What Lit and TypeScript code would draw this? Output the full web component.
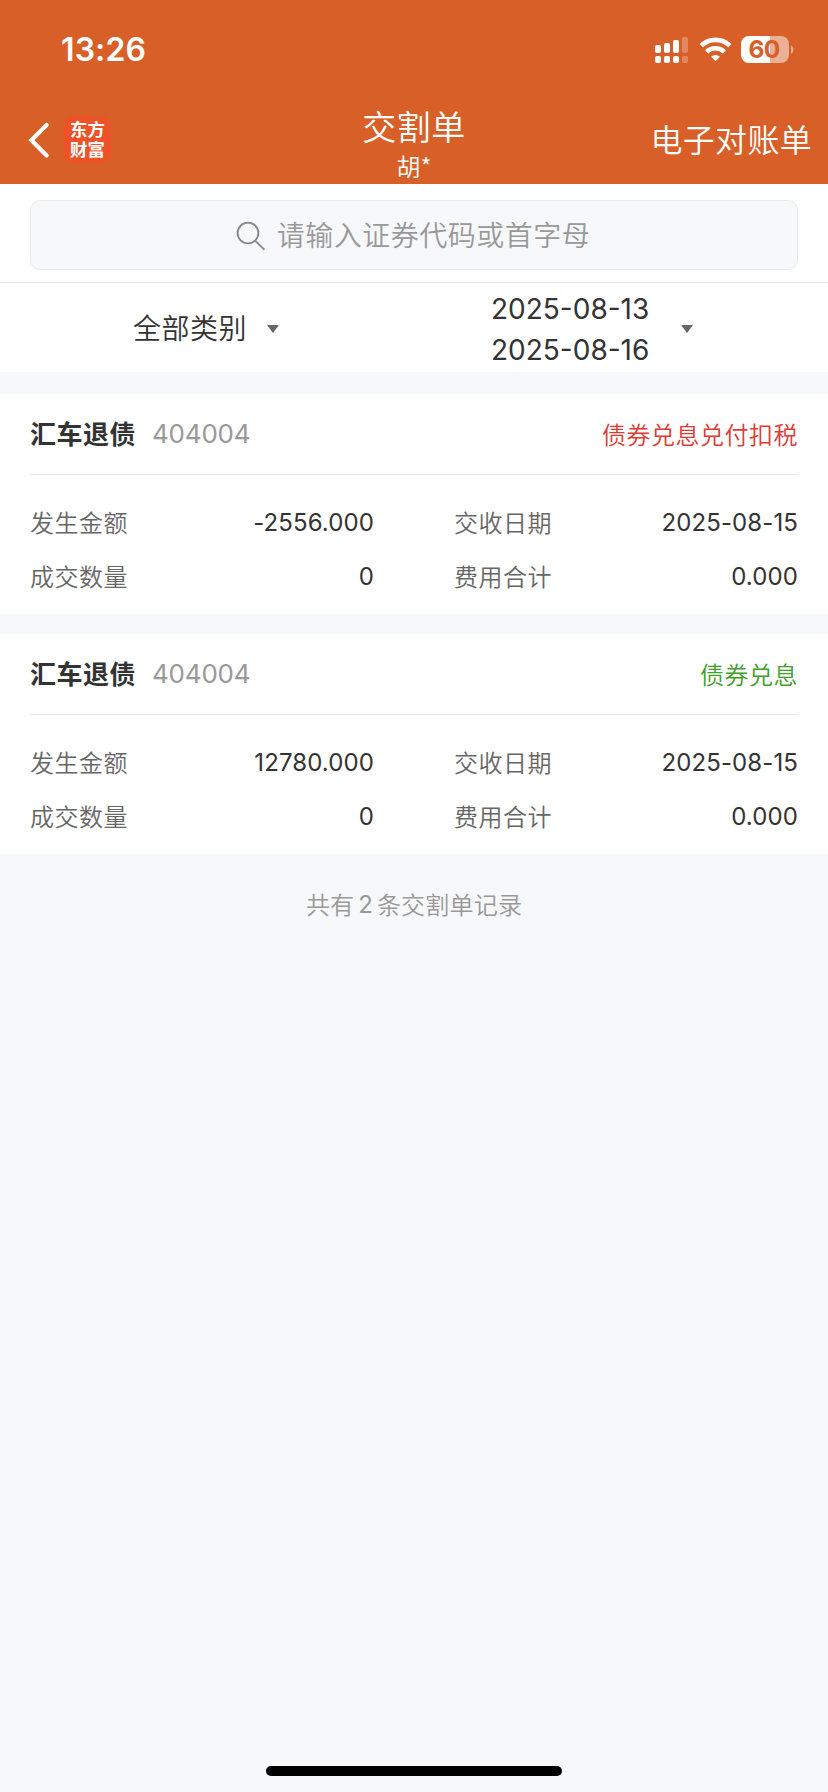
import { LitElement, html, css, svg } from "lit";
import { customElement, property } from "lit/decorators.js";

interface Settlement {
  name: string;
  code: string;
  kind: string;
  tone: "red" | "green";
  amount: string;
  date: string;
  quantity: string;
  fee: string;
}

const RECORDS: Settlement[] = [
  { name: "汇车退债", code: "404004", kind: "债券兑息兑付扣税", tone: "red", amount: "-2556.000", date: "2025-08-15", quantity: "0", fee: "0.000" },
  { name: "汇车退债", code: "404004", kind: "债券兑息", tone: "green", amount: "12780.000", date: "2025-08-15", quantity: "0", fee: "0.000" },
];

@customElement("status-bar")
class StatusBar extends LitElement {
  static styles = css`
    :host { display: flex; align-items: center; justify-content: space-between; height: 100px; padding: 0 34px 0 61px; box-sizing: border-box; }
    .time { font: 600 32px/40px Inter, sans-serif; letter-spacing: 0.1px; color: #fff; }
    .icons { display: block; }
    .level { font: 700 24.5px Inter, sans-serif; fill: #d86028; letter-spacing: -0.6px; }
  `;
  render() {
    const bars = [[0, 45], [9, 43], [18, 40], [27, 37]];
    return html`
      <span class="time">13:26</span>
      <svg class="icons" width="140" height="30" viewBox="654 35 140 30">
        ${bars.map(([x, top], i) => svg`
          <g fill="#fff" opacity=${i === 3 ? 0.25 : 1}>
            <rect x=${655 + x} y=${top} width="6" height=${53 - top} rx="2"></rect>
            <rect x=${655 + x} y="56" width="6" height="7" rx="2"></rect>
          </g>`)}
        <g fill="none" stroke="#fff" stroke-width="4.6">
          <path d="M701.2 45.6a20.6 20.6 0 0 1 28.6 0"></path>
          <path d="M706.6 51.8a12.9 12.9 0 0 1 17.8 0"></path>
        </g>
        <path d="M715.5 61.2l-4.4-4.5a6.3 6.3 0 0 1 8.8 0z" fill="#fff"></path>
        <path d="M749 36h21v27h-21a8 8 0 0 1-8-8v-11a8 8 0 0 1 8-8z" fill="#fff"></path>
        <path d="M770 36h11a8 8 0 0 1 8 8v11a8 8 0 0 1-8 8h-11z" fill="#fff" opacity="0.5"></path>
        <path d="M791 45.3a5 5 0 0 1 0 8.6z" fill="#fff" opacity="0.5"></path>
        <text class="level" x="764" y="58.4" text-anchor="middle">60</text>
      </svg>`;
  }
}

@customElement("title-bar")
class TitleBar extends LitElement {
  static styles = css`
    :host { display: grid; grid-template-columns: 1fr auto 1fr; height: 84px; color: #fff; font-family: "Noto Sans CJK SC", sans-serif; }
    .left { display: flex; align-items: center; gap: 15px; padding: 0 0 5px 28px; }
    .logo { width: 47px; height: 47px; border-radius: 10px; background: #ee5228; padding: 2.5px 5px 0 6px; font-size: 17.4px; font-weight: 700; line-height: 20px; box-sizing: border-box; }
    .middle { text-align: center; font-weight: 350; padding-top: 3px; }
    .title { font-size: 34px; line-height: 46px; letter-spacing: 0.5px; }
    .holder { font-size: 24px; line-height: 33px; }
    .right { display: flex; align-items: center; justify-content: flex-end; padding: 0 16px 9px 0; font-size: 32px; font-weight: 350; letter-spacing: 0.3px; }
  `;
  render() {
    return html`
      <div class="left">
        <svg width="21" height="36" viewBox="0 0 21 36" fill="none" stroke="#fff" stroke-width="4.2" stroke-linecap="round">
          <path d="M18.6 3L3.4 18.2L18.6 33.6"></path>
        </svg>
        <div class="logo">东方财富</div>
      </div>
      <div class="middle">
        <div class="title">交割单</div>
        <div class="holder">胡*</div>
      </div>
      <div class="right">电子对账单</div>`;
  }
}

@customElement("search-box")
class SearchBox extends LitElement {
  static styles = css`
    :host { display: block; padding: 16px 30px 12px; background: #fff; border-bottom: 1px solid #ebebeb; }
    .box { height: 70px; box-sizing: border-box; border: 1px solid #ebebed; border-radius: 10px; background: #f7f8fa; display: flex; align-items: center; justify-content: center; gap: 11px; padding-right: 2px; font: 350 28px/40px "Noto Sans CJK SC", sans-serif; letter-spacing: 0.5px; color: #999; }
    .hint { padding-bottom: 2px; }
    svg { margin-top: 2px; }
  `;
  render() {
    return html`
      <div class="box">
        <svg width="30" height="30" viewBox="0 0 30 30" fill="none" stroke="#888" stroke-width="1.9">
          <circle cx="12" cy="12" r="10.4"></circle><path d="M19 19.6L28.4 28.6"></path>
        </svg>
        <span class="hint">请输入证券代码或首字母</span>
      </div>`;
  }
}

@customElement("filter-bar")
class FilterBar extends LitElement {
  static styles = css`
    :host { display: grid; grid-template-columns: 1fr 1fr; height: 89px; background: #fff; color: #333; }
    .cell { display: flex; align-items: center; }
    .kind { padding-left: 133px; gap: 20px; font: 350 28px/40px "Noto Sans CJK SC", sans-serif; letter-spacing: 0.5px; }
    .dates { padding-left: 77px; gap: 32px; font: 400 28px/41px Inter, sans-serif; }
    .dates div { padding-top: 5px; }
    .dates span { display: block; }
    .label { padding-bottom: 1px; }
    svg { margin-top: 2px; }
  `;
  arrow() {
    return html`<svg width="12" height="8" viewBox="0 0 12 8"><path d="M0 0H12L6 8Z" fill="#666"></path></svg>`;
  }
  render() {
    return html`
      <div class="cell kind"><span class="label">全部类别</span>${this.arrow()}</div>
      <div class="cell dates"><div><span>2025-08-13</span><span>2025-08-16</span></div>${this.arrow()}</div>`;
  }
}

@customElement("record-card")
class RecordCard extends LitElement {
  @property({ attribute: false }) record!: Settlement;
  static styles = css`
    :host { display: block; height: 220px; padding: 0 30px; box-sizing: border-box; background: #fff; color: #333; font-family: "Noto Sans CJK SC", sans-serif; }
    .head { display: flex; align-items: center; height: 81px; box-sizing: border-box; border-bottom: 1px solid #ebebeb; }
    .name { font-size: 26px; font-weight: 700; letter-spacing: 0.5px; padding-bottom: 3px; }
    .code { margin-left: 16px; font: 400 26px/40px Inter, sans-serif; letter-spacing: -0.2px; color: #999; }
    .kind { margin-left: auto; font-size: 24px; font-weight: 350; letter-spacing: 0.5px; padding-bottom: 2px; }
    .red { color: #e03a34; }
    .green { color: #3fa02a; }
    .body { display: grid; grid-template-columns: 1fr 1fr; column-gap: 80px; grid-auto-rows: 54px; padding-top: 21px; }
    .pair { display: flex; align-items: center; justify-content: space-between; }
    .label { font-size: 24px; font-weight: 350; letter-spacing: 0.5px; color: #666; padding-bottom: 4px; }
    .value { font: 400 24px/34px Inter, sans-serif; letter-spacing: 0.1px; }
  `;
  render() {
    const r = this.record;
    const pairs = [["发生金额", r.amount], ["交收日期", r.date], ["成交数量", r.quantity], ["费用合计", r.fee]];
    return html`
      <div class="head">
        <span class="name">${r.name}</span><span class="code">${r.code}</span>
        <span class="kind ${r.tone}">${r.kind}</span>
      </div>
      <div class="body">
        ${pairs.map(([label, value]) => html`<div class="pair"><span class="label">${label}</span><span class="value">${value}</span></div>`)}
      </div>`;
  }
}

@customElement("app-root")
class AppRoot extends LitElement {
  static styles = css`
    :host { display: flex; flex-direction: column; height: 1792px; background: #f7f8fa; }
    .top { background: #d86028; height: 184px; }
    .list { display: flex; flex-direction: column; gap: 20px; padding-top: 22px; }
    .summary { display: flex; justify-content: center; gap: 4px; margin-top: 30px; font: 350 24px/40px "Noto Sans CJK SC", sans-serif; letter-spacing: 0.2px; color: #999; }
    .count { font-family: Inter, sans-serif; font-weight: 400; letter-spacing: 0; padding-top: 1px; }
    .home { width: 296px; height: 10px; border-radius: 5px; background: #000; margin: auto auto 16px; }
  `;
  render() {
    return html`
      <div class="top"><status-bar></status-bar><title-bar></title-bar></div>
      <search-box></search-box>
      <filter-bar></filter-bar>
      <div class="list">${RECORDS.map((r) => html`<record-card .record=${r}></record-card>`)}</div>
      <div class="summary"><span>共有</span><span class="count">${RECORDS.length}</span><span>条交割单记录</span></div>
      <div class="home"></div>`;
  }
}
